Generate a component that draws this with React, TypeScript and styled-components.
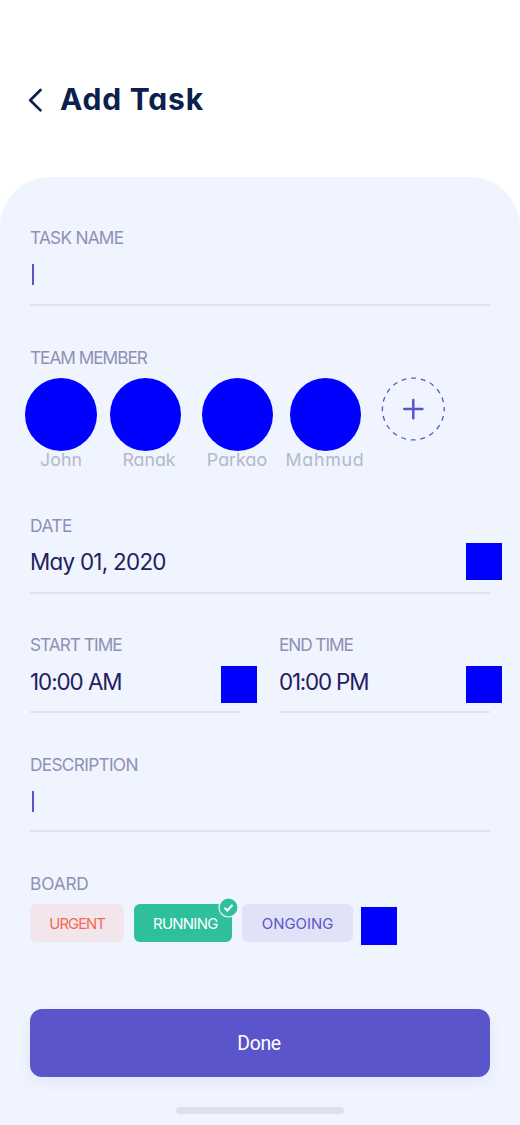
import React from "react";
import styled, { createGlobalStyle } from "styled-components";

const GlobalStyle = createGlobalStyle`
  * { box-sizing: border-box; }
  body { margin: 0; background: #fff; }
`;

const Screen = styled.div`
  display: flex;
  flex-direction: column;
  width: 520px;
  height: 1125px;
  overflow: hidden;
  background: #fff;
  font-family: Inter, "Liberation Sans", sans-serif;
  font-feature-settings: "cv11";
`;

const Header = styled.header`
  display: flex;
  align-items: center;
  gap: 17px;
  height: 177px;
  padding: 23px 0 0 28px;
  flex: none;
`;

const Text = styled.span<{ $track?: number }>`
  letter-spacing: ${(p) => p.$track ?? 0}px;
  white-space: nowrap;
`;

const Title = styled(Text).attrs({ as: "h1" })`
  margin: -3px 0 0;
  font-size: 30px;
  line-height: 40px;
  font-weight: 700;
  color: #0b204c;
`;

const Panel = styled.main`
  display: flex;
  flex-direction: column;
  flex: 1;
  padding: 51px 30px 0;
  border-radius: 50px 50px 0 0;
  background: #eff4fe;
`;

const Section = styled.section<{ $height: number; $gap: number; $line?: boolean }>`
  flex: none;
  display: flex;
  flex-direction: column;
  height: ${(p) => p.$height}px;
  margin-bottom: ${(p) => p.$gap}px;
  border-bottom: ${(p) => (p.$line ? "2px solid #dee3f0" : "none")};
`;

const Label = styled(Text)`
  flex: none;
  font-size: 17.3px;
  line-height: 20px;
  font-weight: 400;
  color: #9090b5;
`;

const Row = styled.div`
  display: flex;
  justify-content: space-between;
  align-items: flex-start;
`;

const Value = styled(Text)<{ $top?: number }>`
  margin-top: ${(p) => p.$top ?? 11}px;
  font-size: 22.4px;
  line-height: 30px;
  font-weight: 400;
  color: #242060;
`;

const Caret = styled.i`
  width: 2px;
  height: 21px;
  margin: 16px 0 0 2px;
  background: #5b55cc;
`;

const Block = styled.span<{ $top: number; $left?: number; $right?: number; $h?: number }>`
  flex: none;
  width: 36px;
  height: ${(p) => p.$h ?? 37}px;
  margin-top: ${(p) => p.$top}px;
  margin-left: ${(p) => p.$left ?? 0}px;
  margin-right: ${(p) => p.$right ?? 0}px;
  background: #00f;
`;

const Times = styled.div`
  display: grid;
  grid-template-columns: 211px 211px;
  justify-content: space-between;
`;

const Members = styled.div`
  display: flex;
  margin: 10px 0 0 -13px;
`;

const Member = styled.div`
  display: flex;
  flex-direction: column;
  align-items: center;
  width: 88px;
`;

const Avatar = styled.span<{ $w: number; $shift?: number }>`
  width: ${(p) => p.$w}px;
  height: 73px;
  margin-right: ${(p) => p.$shift ?? 0}px;
  border-radius: 50%;
  background: #00f;
`;

const Name = styled(Text)`
  margin-top: -2px;
  font-size: 17.8px;
  line-height: 22px;
  font-weight: 400;
  color: #b2b9ca;
`;

const AddButton = styled.button`
  width: 64px;
  height: 64px;
  margin: -1px 0 0 12px;
  padding: 0;
  border: 0;
  background: none;

  svg {
    display: block;
  }
`;

const Chips = styled.div`
  display: flex;
  gap: 10px;
  margin-top: 10px;
`;

const Chip = styled.div<{ $w: number; $bg: string; $fg: string; $indent?: number }>`
  position: relative;
  display: flex;
  align-items: center;
  justify-content: center;
  flex: none;
  width: ${(p) => p.$w}px;
  height: 38px;
  padding-top: 1px;
  padding-left: ${(p) => p.$indent ?? 0}px;
  border-radius: 6px;
  background: ${(p) => p.$bg};
  color: ${(p) => p.$fg};
  font-size: 14.9px;
`;

const Badge = styled.svg`
  position: absolute;
  top: -7px;
  right: -6.5px;
`;

const Done = styled.button`
  flex: none;
  height: 68px;
  padding: 1px 2px 0 0;
  border: 0;
  border-radius: 12px;
  background: #5b55cc;
  box-shadow: 0 5px 14px rgba(91, 85, 204, 0.08);
  color: #fff;
  font: 400 19.4px/24px Roboto, sans-serif;
  letter-spacing: -0.35px;
`;

const HomeBar = styled.div`
  flex: none;
  align-self: center;
  width: 168px;
  height: 6.5px;
  margin-top: 30px;
  border-radius: 3.5px;
  background: #dde1ed;
`;

const members = [
  { name: "John", w: 72, shift: 0, track: 0 },
  { name: "Ranak", w: 71, shift: 7, track: 0 },
  { name: "Parkao", w: 71, shift: 0, track: 0.05 },
  { name: "Mahmud", w: 71, shift: 0, track: 0.75 },
];

export default function App() {
  return (
    <Screen>
      <GlobalStyle />
      <Header>
        <svg width="15" height="26" viewBox="0 0 15 26" fill="none" stroke="#0b204c" strokeWidth="2.7" strokeLinecap="round" strokeLinejoin="round">
          <path d="M12.5 3 2.2 13.2 12.5 23.4" />
        </svg>
        <Title $track={0.8}>Add Task</Title>
      </Header>
      <Panel>
        <Section $height={78} $gap={42} $line>
          <Label $track={-0.75}>TASK NAME</Label>
          <Caret />
        </Section>
        <Section $height={126} $gap={42}>
          <Label $track={-1.05}>TEAM MEMBER</Label>
          <Members>
            {members.map((m) => (
              <Member key={m.name}>
                <Avatar $w={m.w} $shift={m.shift} />
                <Name $track={m.track}>{m.name}</Name>
              </Member>
            ))}
            <AddButton aria-label="Add member">
              <svg width="64" height="64" viewBox="0 0 64 64" fill="none" stroke="#5b55cc">
                <circle cx="32.3" cy="32" r="30.9" strokeWidth="1.3" strokeDasharray="4.85 4.86" strokeDashoffset="2.4" />
                <path d="M32.3 23v18.2M23.2 32.1h18.2" strokeWidth="2.5" strokeLinecap="round" />
              </svg>
            </AddButton>
          </Members>
        </Section>
        <Section $height={78} $gap={41} $line>
          <Label $track={-0.5}>DATE</Label>
          <Row>
            <Value $track={-0.72}>May 01, 2020</Value>
            <Block $top={7} $right={-12} />
          </Row>
        </Section>
        <Times>
          <Section $height={78} $gap={42} $line>
            <Label $track={-1}>START TIME</Label>
            <Row>
              <Value $track={-1.05} $top={12}>10:00 AM</Value>
              <Block $top={11} $right={-16} />
            </Row>
          </Section>
          <Section $height={78} $gap={42} $line>
            <Label $track={-1.1}>END TIME</Label>
            <Row>
              <Value $track={-1.2} $top={12}>01:00 PM</Value>
              <Block $top={11} $right={-12} />
            </Row>
          </Section>
        </Times>
        <Section $height={77} $gap={42} $line>
          <Label $track={-0.7}>DESCRIPTION</Label>
          <Caret />
        </Section>
        <Section $height={71} $gap={64}>
          <Label $track={-0.15}>BOARD</Label>
          <Chips>
            <Chip $w={94.3} $bg="#f2e6ec" $fg="#f26950">
              <Text $track={-1}>URGENT</Text>
            </Chip>
            <Chip $w={98} $bg="#2ec09c" $fg="#fff" $indent={4}>
              <Text $track={-0.7}>RUNNING</Text>
              <Badge width="21" height="21" viewBox="0 0 21 21" fill="none">
                <circle cx="10.5" cy="10.5" r="9.5" fill="#2ec09c" stroke="#eff4fe" strokeWidth="1.2" />
                <path d="m6.4 10.8 2.8 2.7 5.3-5.4" stroke="#fff" strokeWidth="2.1" />
              </Badge>
            </Chip>
            <Chip $w={110.5} $bg="#e0e2f8" $fg="#5b55cc">
              <Text>ONGOING</Text>
            </Chip>
            <Block $top={3} $left={-2} $h={38} />
          </Chips>
        </Section>
        <Done>Done</Done>
        <HomeBar />
      </Panel>
    </Screen>
  );
}
